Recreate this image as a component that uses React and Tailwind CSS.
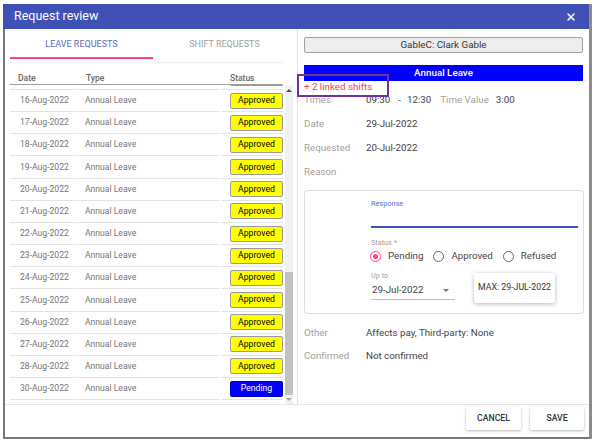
import React from 'react';
import { X } from 'lucide-react';

const days = ['16', '17', '18', '19', '20', '21', '22', '23', '24', '25', '26', '27', '28'];
const rows = [
  ...days.map((d) => ({ date: `${d}-Aug-2022`, status: 'Approved' })),
  { date: '30-Aug-2022', status: 'Pending' },
];

function Badge({ status }) {
  if (status === 'Pending') {
    return (
      <div className="w-[53px] h-[16px] rounded-[2px] border border-[#0000c8] bg-[#0000ff] text-white text-[8.7px] flex items-center justify-center">
        Pending
      </div>
    );
  }
  return (
    <div className="w-[53px] h-[16px] rounded-[2px] border border-[#9a9a9a] bg-[#ffff00] text-black text-[8.7px] flex items-center justify-center">
      Approved
    </div>
  );
}

function Radio({ checked, label }) {
  return (
    <div className="flex items-center">
      {checked ? (
        <div className="w-[11px] h-[11px] rounded-full border-[1.5px] border-[#ff4081] flex items-center justify-center">
          <div className="w-[5px] h-[5px] rounded-full bg-[#ff4081]" />
        </div>
      ) : (
        <div className="w-[11px] h-[11px] rounded-full border-[1.5px] border-[#666666]" />
      )}
      <span className="ml-[7px] text-[9.75px] text-[#444444]">{label}</span>
    </div>
  );
}

function InfoRow({ label, children }) {
  return (
    <div className="h-[12px] flex items-center text-[9.75px]">
      <span className="w-[62px] text-[#a0a0a0]">{label}</span>
      <span className="text-[#424242] flex items-center">{children}</span>
    </div>
  );
}

export default function App() {
  return (
    <div className="w-[594px] h-[440px] bg-white pt-[4px] pl-[3px] overflow-hidden font-[family-name:Roboto,sans-serif]">
      <div className="w-[589px] h-[435px] flex flex-col border-r-[3px] border-[#8c8c8c]">
        {/* Header */}
        <div className="h-[25px] shrink-0 bg-[#3f51b5] flex items-center justify-between pl-[11px] pr-[12px]">
          <span className="text-white text-[12.5px]">Request review</span>
          <X className="w-[12px] h-[12px] text-white" strokeWidth={3} />
        </div>

        <div className="flex-1 flex flex-col border-l-2 border-b-2 border-[#777777]">
          <div className="flex h-[375px] shrink-0">
            {/* Left panel */}
            <div className="w-[293px] shrink-0 border-r border-[#e0e0e0] pl-[5px] flex flex-col">
              <div className="flex w-[286px] h-[30px] text-[9px]">
                <div className="w-[143px] flex items-center justify-center border-b-2 border-[#ff4081] text-[#5c6bc0] pt-[3px]">
                  LEAVE REQUESTS
                </div>
                <div className="w-[143px] flex items-center justify-center text-[#9e9e9e] pt-[1px]">
                  SHIFT REQUESTS
                </div>
              </div>
              <div className="mt-[3px] h-px w-[273px] bg-[#eeeeee]" />
              <div className="w-[273px] h-[22px] flex items-end border-b border-[#9e9e9e] text-[8.5px] leading-[12px] font-medium text-[#666666]">
                <span className="w-[68px] pl-[8px]">Date</span>
                <span className="w-[144px] pl-[8px]">Type</span>
                <span className="pl-[8px]">Status</span>
              </div>
              <div className="flex h-[319px]">
                <div className="w-[273px] overflow-hidden flex flex-col">
                  {/* partially scrolled-away row */}
                  <div className="h-[5px] shrink-0 flex overflow-hidden">
                    <div className="w-[67px] border-b border-[#e3e3e3]" />
                    <div className="w-[142px] ml-[1px] border-b border-[#e3e3e3]" />
                    <div className="flex-1 ml-[2px] pl-[8px] flex items-end border-b border-[#e3e3e3] pb-[3px]">
                      <div className="w-[53px] h-[3px] border-b border-l border-r border-[#9a9a9a] bg-[#ffff00] rounded-b-[2px]" />
                    </div>
                  </div>
                  {rows.map((r) => (
                    <div key={r.date} className="h-[22.17px] shrink-0 flex text-[8.6px] text-[#757575]">
                      <div className="w-[67px] pl-[10px] flex items-center border-b border-[#e3e3e3]">{r.date}</div>
                      <div className="w-[142px] ml-[1px] pl-[7px] flex items-center border-b border-[#e3e3e3]">Annual Leave</div>
                      <div className="flex-1 ml-[2px] pl-[8px] flex items-center border-b border-[#e3e3e3]">
                        <Badge status={r.status} />
                      </div>
                    </div>
                  ))}
                </div>
                {/* scrollbar */}
                <div className="ml-[2px] w-[8px] bg-[#f1f1f1] flex flex-col">
                  <div className="h-[10px] flex items-center justify-center">
                    <div className="w-0 h-0 border-l-[3px] border-r-[3px] border-b-[3px] border-l-transparent border-r-transparent border-b-[#505050]" />
                  </div>
                  <div className="flex-1" />
                  <div className="h-[123px] bg-[#c1c1c1]" />
                  <div className="h-[9px] flex items-center justify-center">
                    <div className="w-0 h-0 border-l-[3px] border-r-[3px] border-t-[3px] border-l-transparent border-r-transparent border-t-[#a3a3a3]" />
                  </div>
                </div>
              </div>
            </div>

            {/* Right panel */}
            <div className="flex-1 relative px-[6px] pt-[8px] flex flex-col">
              <div className="w-[279px] h-[16px] bg-[#eeeeee] border border-[#a0a0a0] rounded-[2px] flex items-center justify-center text-[9.8px] text-[#333333]">
                GableC: Clark Gable
              </div>
              <div className="mt-[12px] w-[279px] h-[16px] bg-[#0000ff] flex items-center justify-center text-[9.8px] font-medium text-white">
                Annual Leave
              </div>
              <div className="h-[13px] flex items-center text-[9.75px] text-[#ff3b4f]">+ 2 linked shifts</div>

              <div className="flex flex-col gap-[12px]">
                <InfoRow label="Times">
                  <span>09:30</span>
                  <span className="ml-[8px]">-</span>
                  <span className="ml-[6px]">12:30</span>
                  <span className="ml-[9px] text-[#a0a0a0]">Time Value</span>
                  <span className="ml-[7px]">3:00</span>
                </InfoRow>
                <InfoRow label="Date">29-Jul-2022</InfoRow>
                <InfoRow label="Requested">20-Jul-2022</InfoRow>
                <InfoRow label="Reason" />
              </div>

              {/* Response box */}
              <div className="mt-[12px] w-[280px] h-[124px] border border-[#dddddd] rounded-[3px] pl-[66px] pr-[5px] pt-[9px] flex flex-col">
                <div className="h-[9px] flex items-center text-[7.3px] text-[#5c6bc0]">Response</div>
                <div className="h-[19px] border-b-2 border-[#3f51b5]" />
                <div className="mt-[11px] h-[9px] flex items-center text-[7.3px] text-[#9e9e9e]">Status *</div>
                <div className="mt-[1px] h-[14px] flex items-center gap-[10px] ml-[-1px]">
                  <Radio checked label="Pending" />
                  <Radio label="Approved" />
                  <Radio label="Refused" />
                </div>
                <div className="mt-[9px] flex items-start">
                  <div className="w-[84px] flex flex-col">
                    <div className="h-[9px] flex items-center text-[7.3px] text-[#9e9e9e]">Up to</div>
                    <div className="h-[19px] border-b border-[#bdbdbd] flex items-center justify-between pl-[1px] pr-[6px] pt-[1px]">
                      <span className="text-[9.75px] text-[#424242]">29-Jul-2022</span>
                      <div className="w-0 h-0 border-l-[3px] border-r-[3px] border-t-[3px] border-l-transparent border-r-transparent border-t-[#757575]" />
                    </div>
                  </div>
                  <div className="ml-[19px] mt-[1px] w-[81px] h-[30px] bg-white rounded-[2px] shadow-[0_1px_4px_rgba(0,0,0,0.3)] flex items-center justify-center text-[8.8px] text-[#333333]">
                    MAX: 29-JUL-2022
                  </div>
                </div>
              </div>

              <div className="mt-[13px] flex flex-col gap-[11px]">
                <InfoRow label="Other">Affects pay, Third-party: None</InfoRow>
                <InfoRow label="Confirmed">Not confirmed</InfoRow>
              </div>

              {/* annotation box */}
              <div className="absolute left-[-1px] top-[45px] w-[92px] h-[23px] border-2 border-[#7030a0]" />
            </div>
          </div>

          {/* Footer */}
          <div className="flex-1 border-t border-[#e5e5e5] flex justify-end items-start pt-[2px] pr-[5px] gap-[9px]">
            <button className="w-[55px] h-[23px] bg-white rounded-[2px] shadow-[0_1px_3px_rgba(0,0,0,0.28)] text-[8.7px] font-medium text-[#333333]">
              CANCEL
            </button>
            <button className="w-[54px] h-[23px] bg-white rounded-[2px] shadow-[0_1px_3px_rgba(0,0,0,0.28)] text-[8.7px] font-medium text-[#333333]">
              SAVE
            </button>
          </div>
        </div>
      </div>
    </div>
  );
}
